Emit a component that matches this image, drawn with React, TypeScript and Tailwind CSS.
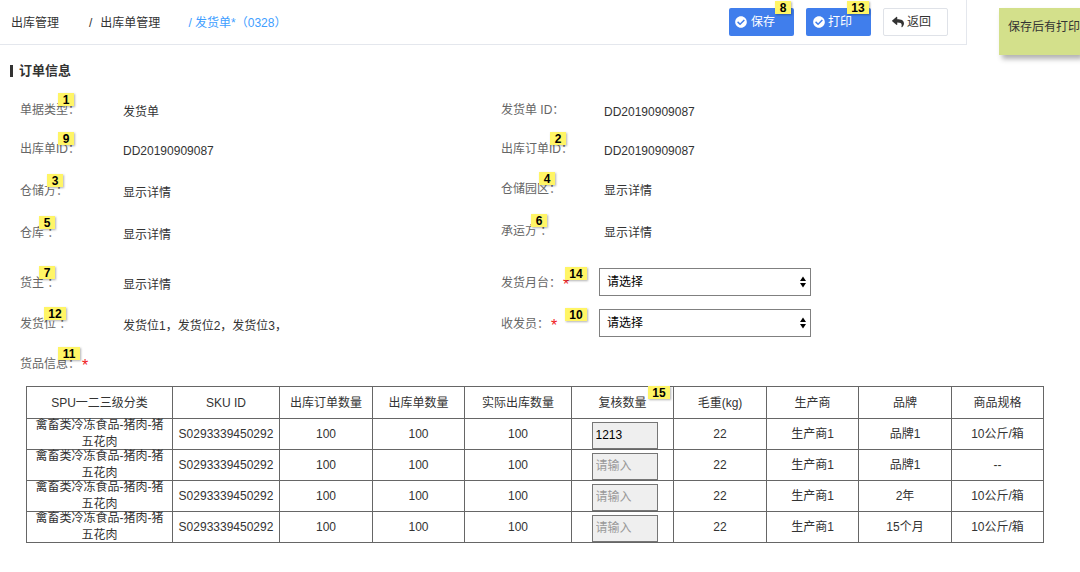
import { useState, type ReactNode } from "react";
import { FaCheckCircle, FaReply } from "react-icons/fa";

function Badge({ n, className }: { n: number; className: string }) {
  return (
    <span
      className={`absolute z-10 flex h-[13px] items-center justify-center bg-[#fff566] text-xs leading-none font-bold text-black shadow-[1px_1px_2px_rgba(0,0,0,0.3)] ${
        n > 9 ? "w-[22px]" : "w-4"
      } ${className}`}
    >
      {n}
    </span>
  );
}

type FieldProps = {
  label: string;
  badge?: number;
  badgeClass?: string;
  required?: boolean;
  labelClass: string;
  rowClass: string;
  htmlFor?: string;
  children?: ReactNode;
};

function Field({ label, badge, badgeClass = "", required, labelClass, rowClass, htmlFor, children }: FieldProps) {
  const content = (
    <>
      {label}
      {required && <span className="ml-0.5 align-sub text-base leading-none text-[#f02020]">*</span>}
      {badge !== undefined && <Badge n={badge} className={badgeClass} />}
    </>
  );
  const cls = `relative shrink-0 whitespace-pre text-[#666] ${labelClass}`;
  return (
    <div className={`flex items-start ${rowClass}`}>
      {htmlFor ? (
        <label htmlFor={htmlFor} className={cls}>
          {content}
        </label>
      ) : (
        <span className={cls}>{content}</span>
      )}
      {children}
    </div>
  );
}

function Picker({ id }: { id: string }) {
  return (
    <div className="relative w-[212px]">
      <select
        id={id}
        className="h-7 w-full appearance-none border border-[#808080] bg-white pr-5 pl-[7px] text-xs text-black"
      >
        <option>请选择</option>
      </select>
      <svg viewBox="0 0 6 12" className="pointer-events-none absolute top-2 right-[5px] h-3 w-1.5">
        <path d="M3 0.5 6 5H0ZM3 11.5 0 7H6Z" fill="#000" />
      </svg>
    </div>
  );
}

const leftFields = [
  { label: "单据类型：", badge: 1, badgeClass: "-top-2 left-[38px]", rowClass: "h-[39px]", value: "发货单" },
  { label: "出库单ID：", badge: 9, badgeClass: "-top-2 left-[38px]", rowClass: "h-[42px]", value: "DD20190909087" },
  { label: "仓储方：", badge: 3, badgeClass: "-top-2 left-[27px]", rowClass: "h-[42px]", value: "显示详情" },
  { label: "仓库 ：", badge: 5, badgeClass: "-top-2 left-[19px]", rowClass: "h-[50px]", value: "显示详情" },
  { label: "货主 ：", badge: 7, badgeClass: "-top-2 left-[19px]", rowClass: "h-[41px]", value: "显示详情" },
  { label: "发货位 ：", badge: 12, badgeClass: "-top-2 left-6", rowClass: "h-10", value: "发货位1，发货位2，发货位3，" },
];

const rightFields = [
  { label: "发货单 ID：", badge: undefined, badgeClass: "", rowClass: "h-[39px]", value: "DD20190909087" },
  { label: "出库订单ID：", badge: 2, badgeClass: "-top-2 left-[49px]", rowClass: "h-10", value: "DD20190909087" },
  { label: "仓储园区：", badge: 4, badgeClass: "-top-2 left-[38px]", rowClass: "h-[42px]", value: "显示详情" },
  { label: "承运方 ：", badge: 6, badgeClass: "-top-2 left-[30px]", rowClass: "h-[46px]", value: "显示详情" },
];

const columns = [
  { title: "SPU一二三级分类", width: "w-[146px]" },
  { title: "SKU ID", width: "w-[107px]" },
  { title: "出库订单数量", width: "w-[93px]" },
  { title: "出库单数量", width: "w-[92px]" },
  { title: "实际出库数量", width: "w-[107px]" },
  { title: "复核数量", width: "w-[102px]" },
  { title: "毛重(kg)", width: "w-[93px]" },
  { title: "生产商", width: "w-[92px]" },
  { title: "品牌", width: "w-[93px]" },
  { title: "商品规格", width: "w-[92px]" },
];

const rows = [
  { checked: "1213", brand: "品牌1", spec: "10公斤/箱" },
  { checked: "", brand: "品牌1", spec: "--" },
  { checked: "", brand: "2年", spec: "10公斤/箱" },
  { checked: "", brand: "15个月", spec: "10公斤/箱" },
];

function Cell({ children, className = "" }: { children: ReactNode; className?: string }) {
  return (
    <td className="border border-[#666] p-0">
      <div className={`flex h-[30px] items-center justify-center text-center leading-[17px] ${className}`}>
        {children}
      </div>
    </td>
  );
}

export default function App() {
  const [counts, setCounts] = useState(rows.map((r) => r.checked));
  return (
    <div className="overflow-hidden bg-white pb-7 font-['Liberation_Sans','Noto_Sans_CJK_SC',sans-serif] text-xs leading-[18px] text-[#333]">
      <div className="flex items-start">
        <header className="flex h-[45px] flex-1 items-center justify-between border-r border-b border-[#e4e7ed] pr-[18px] pl-[11px]">
          <nav aria-label="面包屑" className="flex pt-0.5 whitespace-nowrap">
            <a href="#outbound">出库管理</a>
            <span className="ml-[30px]">/</span>
            <a href="#orders" className="ml-2">
              出库单管理
            </a>
            <a href="#current" className="ml-7 text-[#409eff]">
              / 发货单*（0328）
            </a>
          </nav>
          <div className="flex gap-3">
            <button type="button" className="relative flex h-7 w-[65px] items-center gap-1 rounded-xs bg-[#407eec] pl-1.5 text-white">
              <FaCheckCircle size={12} />
              保存
              <Badge n={8} className="-top-[7px] right-[3px]" />
            </button>
            <button type="button" className="relative flex h-7 w-[65px] items-center gap-[3px] rounded-xs bg-[#407eec] pl-[7px] text-white">
              <FaCheckCircle size={12} />
              打印
              <Badge n={13} className="-top-[7px] right-0.5" />
            </button>
            <button type="button" className="flex h-7 w-[65px] items-center gap-[3px] rounded-xs border border-[#dfe2e8] bg-white pl-2">
              <FaReply size={12} />
              返回
            </button>
          </div>
        </header>
        <aside className="mt-2 ml-8 h-[47px] w-[81px] shrink-0 overflow-hidden bg-[#d3e08b] pt-[10px] pl-[9px] whitespace-nowrap shadow-[3px_4px_5px_rgba(0,0,0,0.3)]">
          保存后有打印
        </aside>
      </div>

      <main>
        <h2 className="mt-[7px] flex items-center gap-1.5 pl-[10px] text-[13px] leading-[18px] font-bold">
          <span className="h-3 w-[3px] bg-[#333]" />
          订单信息
        </h2>

        <section className="mt-[21px] grid grid-cols-2 pr-[98px] pl-5">
          <div>
            {leftFields.map(({ value, ...f }) => (
              <Field key={f.label} {...f} labelClass="w-[103px]">
                <span className="pt-0.5 whitespace-nowrap">{value}</span>
              </Field>
            ))}
            <Field
              label="货品信息："
              badge={11}
              badgeClass="-top-2 left-[38px]"
              required
              labelClass="w-[103px]"
              rowClass="h-[18px]"
            />
          </div>
          <div>
            {rightFields.map(({ value, ...f }) => (
              <Field key={f.label} {...f} labelClass="w-[98px]">
                <span className="pt-0.5 pl-[5px] whitespace-nowrap">{value}</span>
              </Field>
            ))}
            <Field
              label="发货月台："
              badge={14}
              badgeClass="-top-px left-16"
              required
              htmlFor="dock"
              labelClass="w-[98px] pt-1.5"
              rowClass="h-[41px]"
            >
              <Picker id="dock" />
            </Field>
            <Field
              label="收发员："
              badge={10}
              badgeClass="-top-px left-16"
              required
              htmlFor="clerk"
              labelClass="w-[98px] pt-1.5"
              rowClass="h-[41px]"
            >
              <Picker id="clerk" />
            </Field>
          </div>
        </section>

        <div className="mt-[13px] pr-9 pl-[26px]">
          <table className="w-full table-fixed border-collapse">
            <thead>
              <tr>
                {columns.map((c) => (
                  <th key={c.title} scope="col" className={`relative border border-[#666] p-0 font-normal ${c.width}`}>
                    <div className="flex h-[31px] items-center justify-center whitespace-nowrap">{c.title}</div>
                    {c.title === "复核数量" && <Badge n={15} className="-top-px right-[3px]" />}
                  </th>
                ))}
              </tr>
            </thead>
            <tbody>
              {rows.map((r, i) => (
                <tr key={i}>
                  <Cell className="px-1.5">禽畜类冷冻食品-猪肉-猪五花肉</Cell>
                  <Cell>S0293339450292</Cell>
                  <Cell>100</Cell>
                  <Cell>100</Cell>
                  <Cell>100</Cell>
                  <Cell className="pt-0.5 pl-1">
                    <input
                      type="text"
                      aria-label="复核数量"
                      placeholder="请输入"
                      value={counts[i]}
                      onChange={(e) => setCounts(counts.map((v, j) => (j === i ? e.target.value : v)))}
                      className="h-[27px] w-[66px] border border-[#767676] bg-[#efefef] px-[3px] text-black placeholder:text-[#999]"
                    />
                  </Cell>
                  <Cell>22</Cell>
                  <Cell>生产商1</Cell>
                  <Cell>{r.brand}</Cell>
                  <Cell>{r.spec}</Cell>
                </tr>
              ))}
            </tbody>
          </table>
        </div>
      </main>
    </div>
  );
}
